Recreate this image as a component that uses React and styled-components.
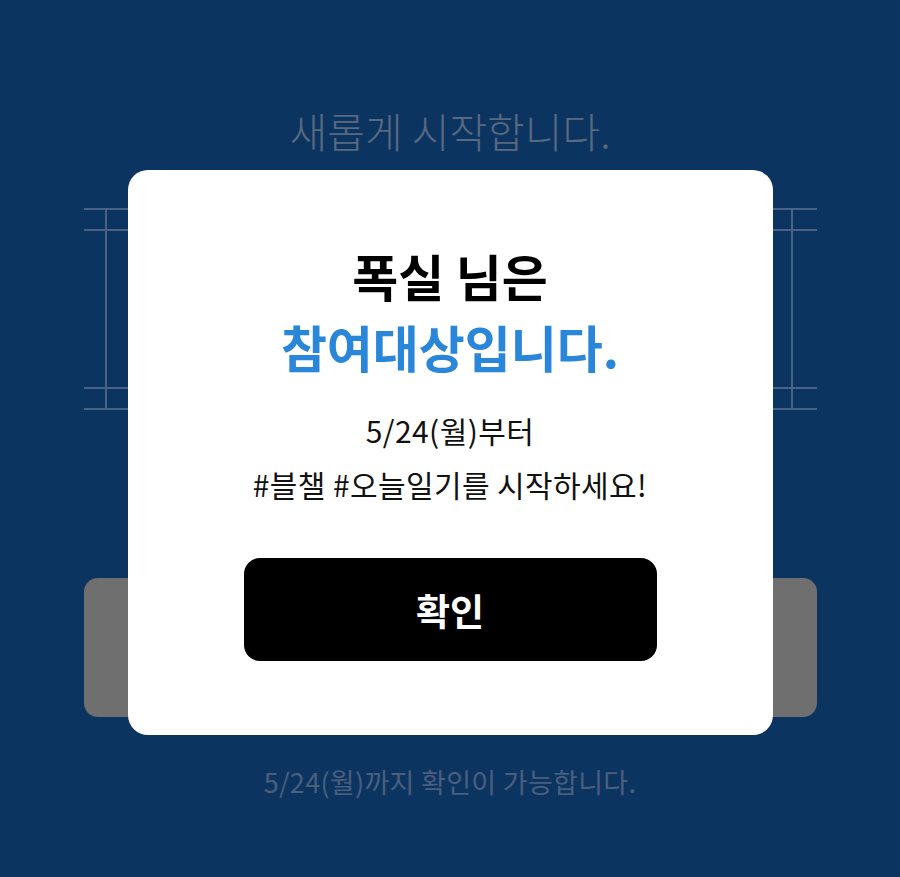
import React from "react"
import styled, { createGlobalStyle } from "styled-components"

const GlobalStyle = createGlobalStyle`
  html, body {
    margin: 0;
    padding: 0;
    background: #0c3461;
  }
  * {
    box-sizing: border-box;
  }
  body {
    font-family: "Noto Sans CJK KR", "Noto Sans", sans-serif;
  }
`

const App = () => {
  return (
    <Page>
      <GlobalStyle />
      <Title>새롭게 시작합니다.</Title>
      <Frame>
        <FrameInner />
      </Frame>
      <GrayCard />
      <Note>5/24(월)까지 확인이 가능합니다.</Note>

      <Overlay>
        <Modal>
          <Heading>
            <HeadLine>폭실 님은</HeadLine>
            <HeadLine highlight>참여대상입니다.</HeadLine>
          </Heading>
          <Message>
            <MessageLine>5/24(월)부터</MessageLine>
            <MessageLine>#블챌 #오늘일기를 시작하세요!</MessageLine>
          </Message>
          <ConfirmButton type="button">확인</ConfirmButton>
        </Modal>
      </Overlay>
    </Page>
  )
}

export default App

const Page = styled.div`
  position: relative;
  width: 900px;
  height: 877px;
  background: #0c3461;
  display: flex;
  flex-direction: column;
  align-items: center;
  padding-top: 106px;
  overflow: hidden;
`

const Title = styled.h1`
  margin: 0;
  font-size: 41px;
  line-height: 48px;
  font-weight: 300;
  letter-spacing: 0;
  color: #59697f;
`

const Frame = styled.div`
  position: relative;
  margin-top: 54px;
  width: 733px;
  height: 202px;
  border-top: 2px solid #4a6285;
  border-bottom: 2px solid #4a6285;
  padding: 19px 0;

  &::before,
  &::after {
    content: "";
    position: absolute;
    top: 0;
    bottom: 0;
    width: 2px;
    background: #4a6285;
  }
  &::before {
    left: 21px;
  }
  &::after {
    right: 24px;
  }
`

const FrameInner = styled.div`
  height: 100%;
  border-top: 2px solid #4a6285;
  border-bottom: 2px solid #4a6285;
`

const GrayCard = styled.div`
  margin-top: 168px;
  width: 733px;
  height: 139px;
  border-radius: 14px;
  background: #6f6f6f;
`

const Note = styled.p`
  margin: 48px 0 0;
  font-size: 27px;
  line-height: 34px;
  font-weight: 400;
  letter-spacing: 0.3px;
  color: #4a5f7e;
`

const Overlay = styled.div`
  position: absolute;
  inset: 0;
  display: flex;
  justify-content: center;
  align-items: flex-start;
  padding-top: 170px;
`

const Modal = styled.div`
  width: 645px;
  height: 565px;
  background: #ffffff;
  border-radius: 20px;
  display: flex;
  flex-direction: column;
  align-items: center;
  padding-top: 70px;
`

const Heading = styled.div`
  display: flex;
  flex-direction: column;
  align-items: center;
`

const HeadLine = styled.div`
  font-size: 50px;
  line-height: 71px;
  font-weight: 700;
  letter-spacing: 0;
  color: ${({ highlight }) => (highlight ? "#2a86d9" : "#000000")};
`

const Message = styled.div`
  margin-top: 21px;
  display: flex;
  flex-direction: column;
  align-items: center;
`

const MessageLine = styled.div`
  font-size: 30px;
  line-height: 54px;
  font-weight: 400;
  letter-spacing: 0.4px;
  color: #111111;
`

const ConfirmButton = styled.button`
  margin-top: 47px;
  width: 413px;
  height: 103px;
  border: none;
  border-radius: 16px;
  background: #000000;
  color: #ffffff;
  font-family: "Noto Sans CJK KR", "Noto Sans", sans-serif;
  font-size: 37px;
  font-weight: 700;
  cursor: pointer;
`
